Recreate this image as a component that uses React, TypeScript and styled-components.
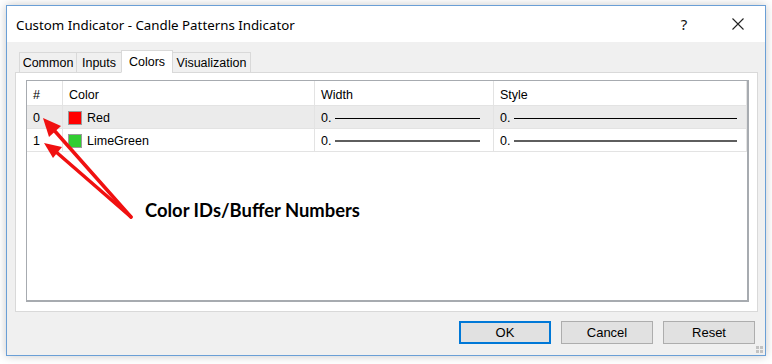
import React from "react";
import styled, { createGlobalStyle } from "styled-components";

const GlobalStyle = createGlobalStyle`
  html, body {
    margin: 0;
    padding: 0;
    background: #ffffff;
  }
  body {
    font-family: "Liberation Sans", Arial, sans-serif;
    font-size: 12.5px;
    color: #000;
  }
  * {
    box-sizing: border-box;
  }
`;

const Page = styled.div`
  position: relative;
  width: 772px;
  height: 364px;
  padding: 5px 0 0 6px;
  overflow: hidden;
`;

const Window = styled.div`
  position: relative;
  width: 760px;
  height: 351px;
  border: 1px solid #6a9fd6;
  background: #f0f0f0;
  box-shadow: 0 0 9px rgba(0, 0, 0, 0.22);
  display: flex;
  flex-direction: column;
`;

const TitleBar = styled.div`
  height: 36px;
  background: #ffffff;
  display: flex;
  align-items: center;
  padding-left: 9px;
`;

const Title = styled.div`
  flex: 1;
  font-family: "Segoe UI", "Noto Sans", sans-serif;
  font-size: 13.3px;
  color: #000;
  padding-top: 1px;
`;

const CaptionButton = styled.div`
  width: 54px;
  height: 36px;
  display: flex;
  align-items: center;
  justify-content: center;
  font-family: "Segoe UI", "Noto Sans", sans-serif;
  font-size: 15px;
  color: #111;
`;

const Body = styled.div`
  flex: 1;
  display: flex;
  flex-direction: column;
  padding: 9px 7px 0 8px;
`;

const TabStrip = styled.div`
  display: flex;
  align-items: flex-end;
  height: 22px;
  padding-left: 5px;
  position: relative;
  z-index: 1;
  margin-bottom: -1px;
`;

const Tab = styled.div<{ $w: number; $active?: boolean }>`
  width: ${(p) => p.$w}px;
  height: ${(p) => (p.$active ? 23 : 21)}px;
  display: flex;
  align-items: center;
  justify-content: center;
  background: ${(p) => (p.$active ? "#ffffff" : "#f0f0f0")};
  border: 1px solid #d9d9d9;
  border-bottom-color: ${(p) => (p.$active ? "#ffffff" : "#d9d9d9")};
  margin-left: -1px;
  padding-top: ${(p) => (p.$active ? 0 : 1)}px;
  color: #000;
`;

const Panel = styled.div`
  height: 240px;
  background: #ffffff;
  border: 1px solid #d9d9d9;
  padding: 7px 8px 9px 10px;
  display: flex;
`;

const ListView = styled.div`
  flex: 1;
  border: 1px solid #a7abb0;
  border-right-width: 2px;
  border-bottom-width: 2px;
  background: #ffffff;
`;

const Row = styled.div<{ $h: number; $shade?: boolean }>`
  display: grid;
  grid-template-columns: 36px 252px 179px 253px;
  height: ${(p) => p.$h}px;
  background: ${(p) => (p.$shade ? "#ebebeb" : "#ffffff")};
`;

const Cell = styled.div<{ $pad?: number }>`
  display: flex;
  align-items: center;
  padding-left: ${(p) => p.$pad ?? 6}px;
  padding-top: 1px;
  border-right: 1px solid #e3e3e3;
  border-bottom: 1px solid #e3e3e3;
  white-space: nowrap;
  overflow: hidden;
`;

const HeadCell = styled(Cell)`
  padding-top: 3px;
`;

const Swatch = styled.span<{ $c: string }>`
  width: 14px;
  height: 14px;
  border: 1px solid #9b9b9b;
  background: ${(p) => p.$c};
  margin-right: 5px;
  flex: none;
`;

const LineSample = styled.span<{ $thick?: boolean; $gap: number }>`
  flex: 1;
  height: ${(p) => (p.$thick ? 2 : 1)}px;
  background: ${(p) => (p.$thick ? "#5e5e5e" : "#000")};
  margin: 1px ${(p) => p.$gap}px 0 4px;
`;

const Buttons = styled.div`
  display: flex;
  justify-content: flex-end;
  gap: 10px;
  padding: 9px 3px 0 0;
`;

const Button = styled.button<{ $default?: boolean }>`
  width: 92px;
  height: 23px;
  background: #e1e1e1;
  border: ${(p) => (p.$default ? "2px solid #0078d7" : "1px solid #adadad")};
  font-family: "Liberation Sans", Arial, sans-serif;
  font-size: 13px;
  color: #000;
  padding: 0;
`;

const Grip = styled.div`
  position: absolute;
  right: 2px;
  bottom: 2px;
  display: grid;
  grid-template-columns: 3px 3px;
  gap: 1px;
  span {
    width: 3px;
    height: 3px;
    background: #c2c2c2;
  }
`;

const Annotation = styled.svg`
  position: absolute;
  left: 0;
  top: 0;
  pointer-events: none;
`;

const Callout = styled.div`
  position: absolute;
  left: 145px;
  top: 199px;
  font-family: "Lato", "Open Sans", sans-serif;
  font-weight: 700;
  font-size: 18.4px;
  color: #000;
  white-space: nowrap;
`;

const rows = [
  { id: 0, name: "Red", color: "#ff0000" },
  { id: 1, name: "LimeGreen", color: "#32cd32" },
];

const tabs = [
  { label: "Common", w: 58 },
  { label: "Inputs", w: 46 },
  { label: "Colors", w: 52, active: true },
  { label: "Visualization", w: 79 },
];

export default function App() {
  return (
    <>
      <GlobalStyle />
      <Page>
        <Window>
          <TitleBar>
            <Title>Custom Indicator - Candle Patterns Indicator</Title>
            <CaptionButton>?</CaptionButton>
            <CaptionButton>
              <svg width="12" height="12" viewBox="0 0 12 12">
                <path d="M0.5 0.5 L11.5 11.5 M11.5 0.5 L0.5 11.5" stroke="#222" strokeWidth="1.1" />
              </svg>
            </CaptionButton>
          </TitleBar>
          <Body>
            <TabStrip>
              {tabs.map((t) => (
                <Tab key={t.label} $w={t.w} $active={t.active}>
                  {t.label}
                </Tab>
              ))}
            </TabStrip>
            <Panel>
              <ListView>
                <Row $h={25}>
                  <HeadCell>#</HeadCell>
                  <HeadCell>Color</HeadCell>
                  <HeadCell>Width</HeadCell>
                  <HeadCell>Style</HeadCell>
                </Row>
                {rows.map((r, i) => (
                  <Row key={r.id} $h={23} $shade={i === 0}>
                    <Cell>{r.id}</Cell>
                    <Cell $pad={5}>
                      <Swatch $c={r.color} />
                      {r.name}
                    </Cell>
                    <Cell>
                      0.
                      <LineSample $thick={i === 1} $gap={13} />
                    </Cell>
                    <Cell>
                      0.
                      <LineSample $thick={i === 1} $gap={9} />
                    </Cell>
                  </Row>
                ))}
              </ListView>
            </Panel>
            <Buttons>
              <Button $default>OK</Button>
              <Button>Cancel</Button>
              <Button>Reset</Button>
            </Buttons>
          </Body>
          <Grip>
            <span />
            <span />
            <span />
            <span />
          </Grip>
        </Window>

        <Annotation width="772" height="364" viewBox="0 0 772 364">
          <g stroke="#f01010" strokeWidth="3.5" strokeLinecap="round">
            <line x1="131" y1="217" x2="53" y2="129" />
            <line x1="131" y1="217" x2="55" y2="151" />
          </g>
          <g fill="#f01010">
            <polygon points="43,118 61,126 49,137" />
            <polygon points="44,143 62,147 53,158" />
          </g>
        </Annotation>
        <Callout>Color IDs/Buffer Numbers</Callout>
      </Page>
    </>
  );
}
